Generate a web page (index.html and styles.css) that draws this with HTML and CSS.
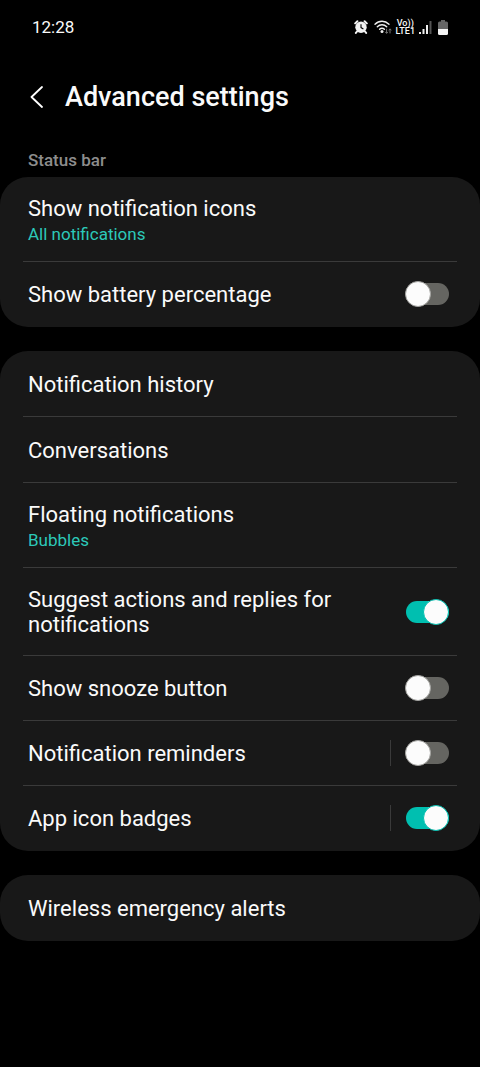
FILE: index.html
```html
<!DOCTYPE html>
<html lang="en">
<head>
<meta charset="utf-8">
<meta name="viewport" content="width=device-width, initial-scale=1">
<title>Advanced settings</title>
<link rel="stylesheet" href="styles.css">
</head>
<body>
<div class="status">
  <time class="clock">12:28</time>
  <div class="indicators">
    <svg class="alarm" width="14" height="14" viewBox="0 0 14 14" aria-hidden="true">
      <path d="M1.200 3.400 3.400 1.300M12.800 3.400 10.600 1.300M3 11.500 1.900 12.900M11 11.500l1.100 1.400" stroke="#f2f2f2" stroke-width="2" stroke-linecap="round"/>
      <circle cx="7" cy="7.300" r="5.700" fill="#f2f2f2"/>
      <path d="M7 4.200v3.400l2.400 1.300" fill="none" stroke="#000" stroke-width="1.100"/>
    </svg>
    <svg class="wifi" width="18" height="14" viewBox="0 0 18 14" aria-hidden="true">
      <g fill="none" stroke="#eee" stroke-width="1.400" stroke-linecap="round">
        <path d="M1 4.200C5 .2 11 .2 15 4.200M3.300 6.800c2.700-2.700 6.700-2.700 9.400 0M5.600 9.300c1.400-1.400 3.400-1.400 4.800 0"/>
      </g>
      <circle cx="8" cy="11.600" r="1.500" fill="#eee"/>
      <path d="M12.600 8.800v4.400M11.300 11.900l1.300 1.500 1.300-1.500M16 13.400V9M14.700 10.300 16 8.800l1.300 1.500" fill="none" stroke="#777" stroke-width="1"/>
    </svg>
    <span class="carrier"><span>Vo))</span><span>LTE1</span></span>
    <svg class="signal" width="13" height="14" viewBox="0 0 13 14" aria-hidden="true">
      <path d="M0 12h2v2H0zM3.500 9h2v5h-2zM7 5h2v9H7z" fill="#eee"/><path d="M10.500 1h2v13h-2z" fill="#555"/>
    </svg>
    <svg class="battery" width="10" height="15" viewBox="0 0 10 15" aria-hidden="true">
      <path d="M3 0h4v1.500h1.500Q10 1.500 10 3v6H0V3q0-1.500 1.500-1.500H3z" fill="#666"/><path d="M0 9h10v4.500q0 1.500-1.500 1.500h-7Q0 15 0 13.500z" fill="#f4f4f4"/>
    </svg>
  </div>
</div>
<header class="header">
  <button class="back" aria-label="Back">
    <svg width="14" height="22" viewBox="0 0 14 22" aria-hidden="true"><path d="M12 1 1.500 11 12 21" fill="none" stroke="#fff" stroke-width="1.800" stroke-linecap="round" stroke-linejoin="round"/></svg>
  </button>
  <h1 class="title">Advanced settings</h1>
</header>
<main class="settings">
  <h2 class="section">Status bar</h2>
  <section class="card">
    <a class="row tall" href="#icons"><span class="label">Show notification icons</span><span class="value">All notifications</span></a>
    <div class="row"><label class="label" for="battery">Show battery percentage</label><input class="switch" type="checkbox" role="switch" id="battery"></div>
  </section>
  <section class="card">
    <a class="row link" href="#history"><span class="label">Notification history</span></a>
    <a class="row link" href="#conversations"><span class="label">Conversations</span></a>
    <a class="row tall" href="#floating"><span class="label">Floating notifications</span><span class="value">Bubbles</span></a>
    <div class="row wrapped"><label class="label" for="suggest">Suggest actions and replies for notifications</label><input class="switch" type="checkbox" role="switch" id="suggest" checked></div>
    <div class="row"><label class="label" for="snooze">Show snooze button</label><input class="switch" type="checkbox" role="switch" id="snooze"></div>
    <div class="row"><label class="label" for="reminders">Notification reminders</label><span class="split"><input class="switch" type="checkbox" role="switch" id="reminders"></span></div>
    <div class="row"><label class="label" for="badges">App icon badges</label><span class="split"><input class="switch" type="checkbox" role="switch" id="badges" checked></span></div>
  </section>
  <section class="card">
    <a class="row link" href="#alerts"><span class="label">Wireless emergency alerts</span></a>
  </section>
</main>
</body>
</html>
```
FILE: styles.css
```css
*, *::before { box-sizing: border-box; }

body {
  margin: 0;
  background: #000;
  color: #fafafa;
  font-family: Roboto, "Liberation Sans", sans-serif;
}

.status {
  display: flex;
  align-items: center;
  justify-content: space-between;
  height: 54px;
  padding: 0 32px;
}

.clock { font-size: 17px; }

.indicators { display: flex; align-items: center; }
.wifi { margin-left: 6px; }
.signal { margin-left: 4px; }
.battery { margin-left: 6px; }

.carrier {
  display: flex;
  flex-direction: column;
  align-items: center;
  margin-left: 4px;
  font-size: 9px;
  font-weight: 500;
  line-height: 8px;
}

.header {
  display: flex;
  align-items: center;
  gap: 16px;
  height: 86px;
  padding: 0 24px;
}

.back {
  display: grid;
  place-items: center;
  width: 25px;
  height: 40px;
  padding: 0;
  border: 0;
  background: none;
}

.title {
  margin: 0;
  font-size: 27px;
  font-weight: 500;
  line-height: 32px;
}

.settings {
  display: flex;
  flex-direction: column;
  gap: 24px;
}

.section {
  margin: 8px 28px -19px;
  color: #8d8d8d;
  font-size: 17px;
  font-weight: 500;
  line-height: 24px;
}

.card {
  padding: 0 23px;
  border-radius: 28px;
  background: #181818;
}

.row {
  display: flex;
  align-items: center;
  justify-content: space-between;
  gap: 16px;
  min-height: 65px;
  padding: 0 8px 0 5px;
  border-bottom: 1px solid #3a3a3a;
  color: inherit;
  text-decoration: none;
}

.row:last-child { border-bottom-color: transparent; }

.link { min-height: 66px; }

.tall {
  flex-direction: column;
  align-items: flex-start;
  justify-content: center;
  gap: 0;
  min-height: 85px;
  padding-top: 2px;
}

.wrapped { min-height: 88px; }

.label {
  max-width: 320px;
  padding-top: 2px;
  font-size: 22px;
  line-height: 26px;
}

.wrapped .label {
  padding-top: 0;
  line-height: 25px;
}

.value {
  color: #2cc9b9;
  font-size: 17px;
  line-height: 25px;
}

.split {
  display: flex;
  align-items: center;
  height: 26px;
  padding-left: 15px;
  border-left: 1px solid #3a3a3a;
}

.switch {
  flex: none;
  display: flex;
  align-items: center;
  width: 43px;
  height: 22px;
  margin: 0;
  border-radius: 11px;
  background: #656561;
  appearance: none;
}

.switch::before {
  content: "";
  flex: none;
  width: 26px;
  height: 26px;
  margin-left: -1px;
  border: 1px solid #a3a3a0;
  border-radius: 50%;
  background: #fcfcfc;
}

.switch:checked { background: #00bfb0; }

.switch:checked::before {
  margin-left: 17px;
  border-color: #00bfb0;
}
```
